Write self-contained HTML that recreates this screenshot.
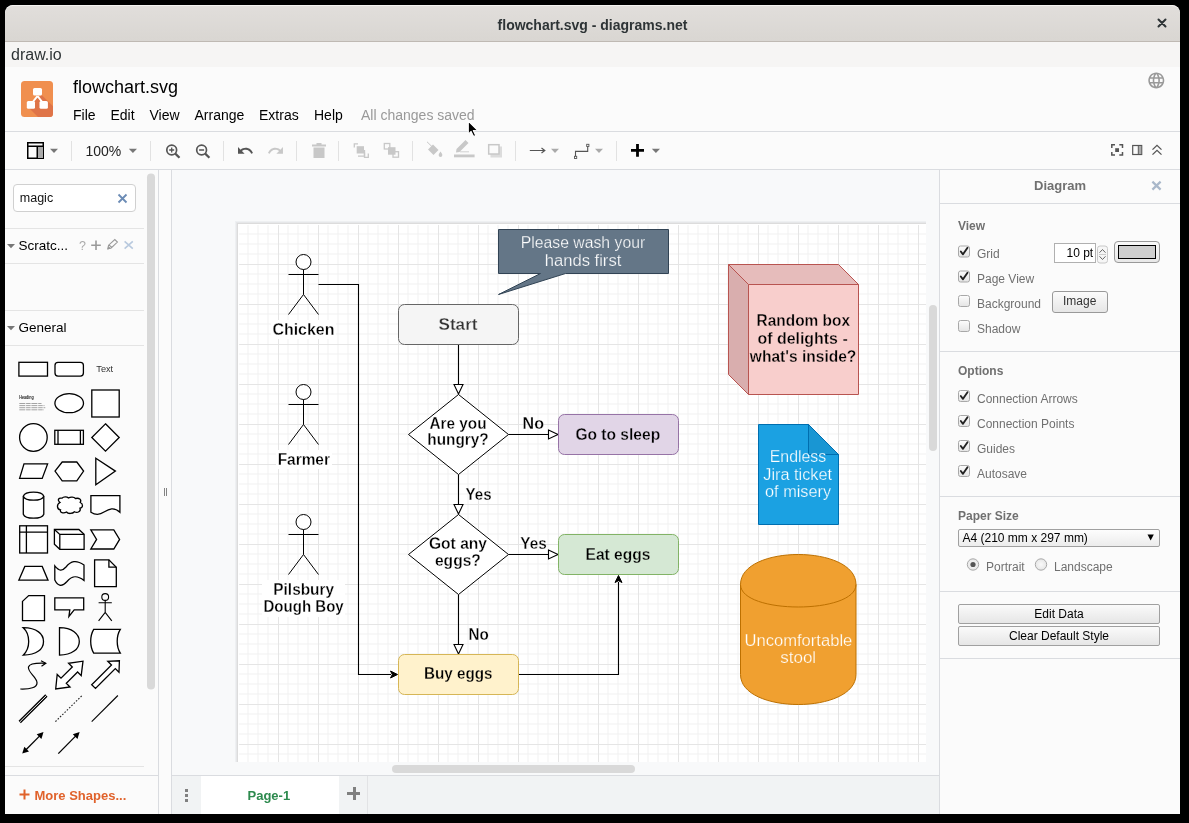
<!DOCTYPE html>
<html><head><meta charset="utf-8">
<style>
*{box-sizing:border-box;margin:0;padding:0}
html,body{width:1189px;height:823px;overflow:hidden;background:#000;font-family:"Liberation Sans",sans-serif}
.a{position:absolute}
.t{position:absolute;white-space:nowrap;line-height:1}
#win{position:absolute;left:5px;top:5px;width:1175px;height:809px;background:#fbfbfb;border-radius:8px 8px 0 0;overflow:hidden;will-change:transform}
</style></head><body>
<div id="win">
  <!-- title bar -->
  <div class="a" style="left:0;top:0;width:1175px;height:37px;background:linear-gradient(#e1dedb,#d9d6d2);border-bottom:1px solid #bfb9b3;border-top:1px solid #f4f2f0;border-radius:8px 8px 0 0"></div>
  <div class="t" style="left:0;width:1175px;text-align:center;top:13px;font-size:14px;font-weight:700;color:#2e3436">flowchart.svg - diagrams.net</div>
  <svg class="a" style="left:1151px;top:12px" width="12" height="12" viewBox="0 0 12 12"><path d="M2.5 2.5L9.5 9.5M9.5 2.5L2.5 9.5" stroke="#2e3436" stroke-width="2" stroke-linecap="round"/></svg>
  <!-- draw.io bar -->
  <div class="a" style="left:0;top:37px;width:1175px;height:25px;background:#f6f5f4"></div>
  <div class="t" style="left:6px;top:42px;font-size:16px;color:#2e3436">draw.io</div>
  <!-- header -->
  <div class="a" style="left:0;top:62px;width:1175px;height:65px;background:#fbfbfb;border-bottom:1px solid #dadce0"></div>
    <svg class="a" style="left:16px;top:76px" width="32" height="36" viewBox="0 0 32 36">
    <rect x="0" y="0" width="32" height="36" rx="3.5" fill="#f08f4f"/>
    <path d="M20.7 14 L32 25.3 L32 32.5 Q32 36 28.5 36 L17 36 L6 25 Z" fill="#df7448"/>
    <path d="M16.5 15 L11 22 M16.5 15 L22 22" stroke="#fff" stroke-width="2"/>
    <rect x="12" y="7" width="9" height="7.5" rx="1.5" fill="#fff"/>
    <rect x="5.8" y="20" width="8.2" height="7.8" rx="1.5" fill="#fff"/>
    <rect x="18.5" y="20" width="8.4" height="7.8" rx="1.5" fill="#fff"/>
  </svg>
  <div class="t" style="left:68px;top:73px;font-size:18px;color:#000">flowchart.svg</div>
  <div class="t" style="left:68px;top:103px;font-size:14px;color:#000">File</div>
  <div class="t" style="left:105.5px;top:103px;font-size:14px;color:#000">Edit</div>
  <div class="t" style="left:144.5px;top:103px;font-size:14px;color:#000">View</div>
  <div class="t" style="left:189.5px;top:103px;font-size:14px;color:#000">Arrange</div>
  <div class="t" style="left:254px;top:103px;font-size:14px;color:#000">Extras</div>
  <div class="t" style="left:309px;top:103px;font-size:14px;color:#000">Help</div>
  <div class="t" style="left:356px;top:103px;font-size:14px;color:#999">All changes saved</div>
  <svg class="a" style="left:0;top:0" width="1175" height="120" viewBox="5 5 1175 120"><path transform="translate(1146.7 70.8) scale(0.8)" fill="#9a9a9a" d="M11.99 2C6.47 2 2 6.48 2 12s4.47 10 9.99 10C17.520 22 22 17.52 22 12S17.52 2 11.99 2zm6.93 6h-2.95c-.32-1.25-.78-2.45-1.38-3.56 1.84.63 3.37 1.91 4.33 3.56zM12 4.04c.83 1.2 1.48 2.53 1.91 3.96h-3.82c.43-1.43 1.08-2.76 1.910-3.960zM4.26 14C4.1 13.36 4 12.69 4 12s.1-1.36.26-2h3.38c-.08.66-.14 1.32-.14 2 0 .68.06 1.34.14 2H4.26zm.82 2h2.95c.32 1.25.78 2.45 1.38 3.56-1.84-.63-3.37-1.9-4.33-3.56zm2.95-8H5.08c.96-1.66 2.49-2.93 4.33-3.56C8.81 5.55 8.35 6.75 8.03 8zM12 19.96c-.83-1.2-1.48-2.53-1.91-3.96h3.82c-.43 1.43-1.08 2.76-1.91 3.96zM14.34 14H9.66c-.09-.66-.16-1.32-.16-2 0-.68.07-1.35.16-2h4.68c.09.65.16 1.32.16 2 0 .68-.07 1.34-.16 2zm.25 5.56c.6-1.11 1.06-2.31 1.38-3.56h2.95c-.96 1.65-2.49 2.93-4.33 3.56zM16.36 14c.08-.66.14-1.32.14-2 0-.68-.06-1.34-.14-2h3.38c.16.64.26 1.31.26 2s-.1 1.36-.26 2h-3.38z"/></svg>
  <svg class="a" style="left:0;top:0;z-index:50" width="1175" height="200" viewBox="5 5 1175 200">
    <path d="M468.3 121.2V134.2L471.1 131.4L473.6 136.5L475.7 135.6L473.3 130.5L477.4 130.2Z" fill="#000" stroke="#fff" stroke-width="1.1" stroke-linejoin="round"/>
  </svg>

  <!-- toolbar -->
  <div class="a" style="left:0;top:127px;width:1175px;height:38px;background:#fbfbfb;border-bottom:1px solid #dadce0"></div>
    <!-- toolbar (win coords = page - 5) -->
  <svg class="a" style="left:0;top:127px" width="1175" height="38" viewBox="5 132 1175 38">
    <g fill="none">
      <rect x="27.75" y="142.75" width="15.5" height="15.5" stroke="#000" stroke-width="1.5"/>
      <rect x="38" y="147" width="5" height="11" fill="#aaa"/>
      <path d="M27.75 146.25H43.25M37.25 146.25V158.25" stroke="#000" stroke-width="1.5"/>
    </g>
    <g fill="#777">
      <path d="M50 148.7H58L54 153Z"/>
      <path d="M128.8 148.7H137L132.9 153Z"/>
      <path d="M651.8 148.7H660L655.9 153Z"/>
    </g>
    <g fill="#aaa">
      <path d="M551 148.7H559L555 153Z"/>
      <path d="M595 148.7H603L599 153Z"/>
    </g>
    <g stroke="#e2e2e2" stroke-width="1">
      <path d="M71.5 141V161M150.5 141V161M223.5 141V161M296.5 141V161M338.5 141V161M412.5 141V161M515.5 141V161M616.5 141V161"/>
    </g>
    <!-- zoom in/out -->
    <g fill="none" stroke="#555" stroke-width="1.7">
      <circle cx="171.7" cy="150" r="4.9"/>
      <path d="M175.3 153.6L179.5 157.8" stroke-width="2.2"/>
      <path d="M169.2 150H174.2M171.7 147.5V152.5" stroke-width="1.3"/>
      <circle cx="201.6" cy="150" r="4.9"/>
      <path d="M205.2 153.6L209.4 157.8" stroke-width="2.2"/>
      <path d="M199.1 150H204.1" stroke-width="1.3"/>
    </g>
    <!-- undo / redo -->
    <path transform="translate(236.54 142) scale(0.73)" d="M12.5 8c-2.65 0-5.05.99-6.9 2.6L2 7v9h9l-3.62-3.62c1.39-1.16 3.16-1.88 5.12-1.88 3.54 0 6.550 2.31 7.6 5.5l2.37-.78C21.08 11.03 17.15 8 12.5 8z" fill="#555"/>
    <path transform="translate(266.9 142) scale(0.73)" d="M18.4 10.6C16.55 8.99 14.15 8 11.5 8c-4.65 0-8.58 3.03-9.960 7.22L3.9 16c1.05-3.19 4.05-5.5 7.6-5.5 1.95 0 3.73.72 5.12 1.88L13 16h9V7l-3.6 3.6z" fill="#c8c8c8"/>
    <!-- trash -->
    <g fill="#c8c8c8"><rect x="312" y="144.5" width="14" height="2"/><rect x="316.5" y="143" width="5" height="2"/><rect x="313.5" y="147.5" width="11" height="10.5"/></g>
    <!-- to front / to back -->
    <g fill="none" stroke="#c8c8c8" stroke-width="1.3">
      <path d="M354.3 147.5V143.8H358M364.5 152.5V157.4H368.3V153.6"/>
      <path d="M358 156.2H364.5V150"/>
      <rect x="384.3" y="143.5" width="5.5" height="5.5"/><rect x="393" y="151.7" width="5.5" height="5.5"/>
    </g>
    <rect x="356.7" y="146.2" width="7.3" height="7.3" fill="#c8c8c8"/>
    <rect x="388" y="147.2" width="7.5" height="7.5" fill="#c8c8c8"/>
    <!-- fill -->
    <path d="M428 149.5 L433 144.5 L438.5 150 L433.5 155 Z" fill="#c8c8c8"/>
    <path d="M427 141.8 L435 149.5" stroke="#c8c8c8" stroke-width="1"/>
    <path d="M440.5 151.5 Q442.5 154 442.3 155.3 A1.8 1.8 0 0 1 438.7 155.3 Q438.5 154 440.5 151.5Z" fill="#c8c8c8"/>
    <!-- line color -->
    <rect x="454" y="154.5" width="20.6" height="2.8" fill="#c8c8c8"/>
    <path d="M456 152.5 L456.5 149 L465.5 140 L468.5 143 L459.5 152 Z" fill="#c8c8c8"/>
    <path d="M460 151.8 H469" stroke="#c8c8c8" stroke-width="0.8"/>
    <!-- shadow -->
    <rect x="490.5" y="146.5" width="11.5" height="11" fill="#dcdcdc"/>
    <rect x="488.7" y="144.7" width="10.3" height="9.3" fill="#fbfbfb" stroke="#c8c8c8" stroke-width="1.5"/>
    <!-- connection arrow -->
    <path d="M529.8 150.5H544.5M541.5 148L544.8 150.5L541.5 153" fill="none" stroke="#555" stroke-width="1.2"/>
    <!-- waypoints -->
    <path d="M575.5 156.4V151.4H587.7V146.6" fill="none" stroke="#555" stroke-width="1.1"/>
    <rect x="574.5" y="156.3" width="2.2" height="2.2" fill="#fff" stroke="#555" stroke-width="0.9"/>
    <rect x="586.7" y="144.3" width="2.2" height="2.2" fill="#fff" stroke="#555" stroke-width="0.9"/>
    <!-- plus -->
    <path d="M637.5 144V156.7M631 150.3H644" stroke="#000" stroke-width="2.8"/>
    <!-- right icons -->
    <g fill="none" stroke="#555" stroke-width="1.5">
      <path d="M1111.8 148V144.8H1115M1119.3 144.8H1122.5V148M1122.5 152V155.1H1119.3M1115 155.1H1111.8V152"/>
      <rect x="1132.7" y="145.5" width="9" height="9" stroke-width="1.2"/>
      <path d="M1152.5 149.6L1157 145.3L1161.5 149.6M1152.5 154.6L1157 150.3L1161.5 154.6" stroke-width="1.3"/>
    </g>
    <rect x="1115.2" y="148.2" width="3.8" height="3.8" fill="#555"/>
    <rect x="1138.6" y="146" width="2.6" height="8" fill="#aaa"/>
    <path d="M1138.3 145.5V154.5" stroke="#555" stroke-width="1"/>
  </svg>
  <div class="t" style="left:80.5px;top:139px;font-size:14px;color:#222">100%</div>

  <!-- sidebar -->
  <div class="a" style="left:0;top:165px;width:154px;height:644px;background:#fbfbfb;border-right:1px solid #dadce0"></div>
  <div class="a" style="left:0;top:770px;width:153px;height:1px;background:#dadce0"></div>
  <div class="a" style="left:154px;top:165px;width:13px;height:644px;background:#fbfbfb;border-right:1px solid #dadce0"></div>
    <!-- sidebar -->
  <div class="a" style="left:8px;top:179px;width:123px;height:28px;background:#fff;border:1px solid #d0d0d0;border-radius:4px"></div>
  <div class="t" style="left:14.8px;top:186.5px;font-size:12.5px;color:#111">magic</div>
  <div class="t" style="left:13.6px;top:234.2px;font-size:13.5px;color:#000">Scratc...</div>
  <div class="t" style="left:13.6px;top:316.2px;font-size:13.5px;color:#000">General</div>
  <div class="t" style="left:91.3px;top:360px;font-size:9.2px;color:#333">Text</div>
  <div class="t" style="left:29.5px;top:784px;font-size:13px;font-weight:700;color:#e0622b">More Shapes...</div>
  <svg class="a" style="left:0;top:165px" width="167" height="644" viewBox="5 170 167 644">
    <!-- search x -->
    <path d="M118.5 194.5L126.5 202.5M126.5 194.5L118.5 202.5" stroke="#6b8bb5" stroke-width="1.8"/>
    <g stroke="#e4e4e4" stroke-width="1"><path d="M5 228.5H144M5 263.5H144M5 310.5H144M5 345.5H144M5 766.5H144"/></g>
    <path d="M7 244H15L11 248.3Z" fill="#777"/>
    <path d="M7 326H15L11 330.3Z" fill="#777"/>
    <text x="79" y="250" font-family="Liberation Sans" font-size="12.5" fill="#aaa">?</text>
    <path d="M96 240.5V250M91.2 245.2H100.8" stroke="#999" stroke-width="1.6"/>
    <path d="M107.8 248.7L108.6 245.2L114.8 239.5L117.4 242.1L111.2 248Z M109 244.8L112 247.6" fill="none" stroke="#999" stroke-width="1.1"/>
    <path d="M107.6 249.5L108.4 246L111 248.5Z" fill="#999"/>
    <path d="M124.6 241.3L132.8 248.6M132.8 241.3L124.6 248.6" stroke="#b8c9de" stroke-width="1.6"/>
    <!-- scrollbar -->
    <rect x="147" y="173.5" width="8" height="516" rx="4" fill="#d9d9d9"/>
    <!-- splitter -->
    <path d="M164.5 488V496M166.5 488V496" stroke="#666" stroke-width="0.8"/>
    <!-- more shapes plus -->
    <path d="M24.5 789.5V799.5M19.5 794.5H29.5" stroke="#e0622b" stroke-width="2"/>
    <!-- shapes -->
    <g fill="#fff" stroke="#000" stroke-width="1.3" stroke-linejoin="miter">
      <rect x="18.9" y="362.3" width="28.6" height="13.8"/>
      <rect x="55" y="362.3" width="28.4" height="13.8" rx="3"/>
      <ellipse cx="69.2" cy="403.2" rx="14.3" ry="9.5"/>
      <rect x="91.8" y="390" width="27.4" height="27"/>
      <circle cx="33.4" cy="437.5" r="13.8"/>
      <rect x="54.8" y="430.3" width="28.6" height="14"/>
      <path d="M58 430.3V444.3M80.4 430.3V444.3" fill="none"/>
      <path d="M105.5 423.8L119.2 437.5L105.5 451.2L91.8 437.5Z"/>
      <path d="M19.6 478.4L24 463.9H47.6L42.2 478.4Z"/>
      <path d="M55 471.1L62.2 462H76.8L83.6 471.1L76.8 480.8H62.2Z"/>
      <path d="M95.8 458.2L115.4 471.1L95.8 484.8Z"/>
      <path d="M23.3 496.2A10.4 4.8 0 0 1 43.8 496.2V514.2A10.4 4.8 0 0 1 23.3 514.2Z"/>
      <path d="M23.3 496.2A10.4 4.8 0 0 0 43.8 496.2" fill="none"/>
      <path d="M60 502.5C57 500 58.5 497.5 62 498.2C63.5 496.4 67 496.6 68.5 498C70.5 496.6 74 496.8 75.5 498.5C79 497.6 82 499.5 80.2 502.5C83.5 504 83 507.8 80 508.2C81.2 511.2 77.5 513.5 74.5 511.8C72.5 514 68 514 66.5 512C63.5 513.8 59.5 512.6 60.5 509.8C56.8 509.4 56.3 504.2 60 502.5Z"/>
      <path d="M90.9 495.7H119.9V512.2C114 506.5 109 509 104 512C99 515.5 94.5 514.5 90.9 512.2Z"/>
      <rect x="19.7" y="525.8" width="27.8" height="27.2"/>
      <path d="M26.4 525.8V553M19.7 532.2H47.5" fill="none"/>
      <path d="M54.4 529.5H78.9L84.1 534.4V549.3H59.8L54.4 544.2Z"/>
      <path d="M54.4 529.5L59.8 534.4H84.1M59.8 534.4V549.3" fill="none"/>
      <path d="M90.8 529.8H113.8L119.6 539.4L113.8 549H90.8L96.6 539.4Z"/>
      <path d="M18.8 580.2L24.8 566.4H42.2L48 580.2Z"/>
      <path d="M54.8 565.8C59 571 62 571.5 66 567C71 561 76 559.5 84 565V580.5C77 575 72 575.5 67 581.5C62 587 58 586.5 54.8 580Z"/>
      <path d="M94.6 559.8H108.9L116.3 567.2V586.6H94.6Z"/>
      <path d="M108.9 559.8V567.2H116.3" fill="none"/>
      <path d="M22.5 601.4L28.7 595.6H44.5V620.7H22.5Z"/>
      <path d="M54.8 597.8H83.7V609.8H74.2L68.9 616.5L69.8 609.8H54.8Z"/>
      <path d="M23.2 627.7C37 628 43.5 634 43.5 641.4C43.5 649 37 655 23.2 655.1C27.5 651 28.7 646 28.7 641.4C28.7 636.5 27.5 631.5 23.2 627.7Z"/>
      <path d="M59.5 627.7C72 627.7 79.3 634 79.3 641.4C79.3 649 72 655.1 59.5 655.1Z"/>
      <path d="M93.7 629.3H120.3C118 633 117.2 637 117.2 641.3C117.2 645.5 118 649.5 120.3 653.2H93.7C91.5 649.5 90.7 645.5 90.7 641.3C90.7 637 91.5 633 93.7 629.3Z"/>
    </g>
    <!-- actor -->
    <g fill="none" stroke="#000" stroke-width="1.1">
      <circle cx="105.2" cy="597" r="3.4"/>
      <path d="M105.2 600.4V612.4M98.6 602.8H111.8M98.6 620.8L105.2 612.4L111.8 620.8"/>
      <path d="M20.3 689C29 689.3 38.5 688 36.8 681.5C35.5 676 27.5 672 28.5 667C29.5 663 38 663 45.5 663.3" stroke-width="1.2"/>
      <path d="M41 660.8L45.8 663.3L41.5 666.3" stroke-width="1.2"/>
    </g>
    <g fill="#fff" stroke="#000" stroke-width="1.3">
      <path d="M55.7 689L57.2 674.5L61 678.2L72.3 667L68.6 663.3L83 661.2L81.2 675.6L77.6 672L66.3 683.3L70 687Z"/>
      <path d="M91.7 684.8L111.5 665L107.8 661.3L119.4 660.8L119 672.3L115.3 668.6L95.5 688.4Z"/>
    </g>
    <g stroke="#000" fill="none">
      <path d="M19.7 722L46.4 695.5" stroke-width="3.2"/>
      <path d="M19.7 722L46.4 695.5" stroke="#fff" stroke-width="1"/>
      <path d="M55.4 721.6L81.8 695.8" stroke-width="1.1" stroke-dasharray="1.6 1.6" stroke="#222"/>
      <path d="M91.7 721.6L117.9 695.5" stroke-width="1.1"/>
      <path d="M24.5 751.3L41.2 734.4" stroke-width="1.3"/>
      <path d="M58.3 753.6L77.3 734.4" stroke-width="1.3"/>
    </g>
    <g fill="#000">
      <path d="M22.2 753.6L24.3 746.8L29 751.5Z"/>
      <path d="M43.5 732.1L41.4 738.9L36.7 734.2Z"/>
      <path d="M79.6 732.1L77.5 738.9L72.8 734.2Z"/>
    </g>
    <!-- heading -->
    <text x="19.3" y="399.3" font-family="Liberation Sans" font-size="5.2" font-weight="700" fill="#222" textLength="14.5" lengthAdjust="spacingAndGlyphs">Heading</text>
    <g stroke="#6a6a6a" stroke-width="0.6" stroke-dasharray="6 0.8 4.5 0.8"><path d="M19.3 403.5H41.5M19.3 405.6H44.5M19.3 407.7H45.3M19.3 409.8H44"/></g>
  </svg>

  <!-- canvas -->
  <svg class="a" style="left:167px;top:165px" width="767" height="605" viewBox="172 170 767 605">
<rect x="172" y="170" width="767" height="605" fill="#f8f9fa"/>
<rect x="235" y="221" width="691" height="541" fill="#eef0f2"/>
<rect x="236" y="222" width="690" height="540" fill="#e6e7e9"/>
<rect x="237" y="223" width="689" height="539" fill="#dcdcdc"/>
<rect x="238" y="224" width="688" height="538" fill="#fff"/>
<path d="M248 225V762M258 225V762M268 225V762M288 225V762M298 225V762M308 225V762M328 225V762M338 225V762M348 225V762M368 225V762M378 225V762M388 225V762M408 225V762M418 225V762M428 225V762M448 225V762M458 225V762M468 225V762M488 225V762M498 225V762M508 225V762M528 225V762M538 225V762M548 225V762M568 225V762M578 225V762M588 225V762M608 225V762M618 225V762M628 225V762M648 225V762M658 225V762M668 225V762M688 225V762M698 225V762M708 225V762M728 225V762M738 225V762M748 225V762M768 225V762M778 225V762M788 225V762M808 225V762M818 225V762M828 225V762M848 225V762M858 225V762M868 225V762M888 225V762M898 225V762M908 225V762M239 234H926M239 244H926M239 254H926M239 274H926M239 284H926M239 294H926M239 314H926M239 324H926M239 334H926M239 354H926M239 364H926M239 374H926M239 394H926M239 404H926M239 414H926M239 434H926M239 444H926M239 454H926M239 474H926M239 484H926M239 494H926M239 514H926M239 524H926M239 534H926M239 554H926M239 564H926M239 574H926M239 594H926M239 604H926M239 614H926M239 634H926M239 644H926M239 654H926M239 674H926M239 684H926M239 694H926M239 714H926M239 724H926M239 734H926M239 754H926" stroke="#f1f1f1" stroke-width="1"/>
<path d="M278.5 225V762M318.5 225V762M358.5 225V762M398.5 225V762M438.5 225V762M478.5 225V762M518.5 225V762M558.5 225V762M598.5 225V762M638.5 225V762M678.5 225V762M718.5 225V762M758.5 225V762M798.5 225V762M838.5 225V762M878.5 225V762M918.5 225V762M239 264.5H926M239 304.5H926M239 344.5H926M239 384.5H926M239 424.5H926M239 464.5H926M239 504.5H926M239 544.5H926M239 584.5H926M239 624.5H926M239 664.5H926M239 704.5H926M239 744.5H926" stroke="#e5e5e5" stroke-width="1"/>
<g fill="none" stroke="#000" stroke-width="1.1"><path d="M318.5 284.5H358.5V674.5H391"/><path d="M458.5 344.5V385"/><path d="M508.5 434.5H549"/><path d="M458.5 474.5V505"/><path d="M508.5 554.5H549"/><path d="M458.5 594.5V645"/><path d="M518.5 674.5H618.5V582"/></g>
<g fill="#fff" stroke="#000" stroke-width="1.1"><path d="M454 384.5H463L458.5 394Z"/><path d="M548.5 430L558 434.5L548.5 439Z"/><path d="M454 504.5H463L458.5 514Z"/><path d="M548.5 550L558 554.5L548.5 559Z"/><path d="M454 644.5H463L458.5 654Z"/></g>
<g fill="#000" stroke="#000" stroke-width="1"><path d="M397.5 674.5L390.5 671L392.3 674.5L390.5 678Z"/><path d="M618.5 575.5L615 582.5L618.5 580.7L622 582.5Z"/></g>
<path d="M498.5 229.5H668.5V273.5H565.5L498.5 294.5L540.5 273.5H498.5Z" fill="#647687" stroke="#314354" stroke-width="1"/>
<text x="583.0" y="248" text-anchor="middle" font-family="Liberation Sans" font-size="16" font-weight="400" fill="#fff" textLength="124.3" lengthAdjust="spacingAndGlyphs" stroke="#647687" stroke-width="0.25">Please wash your</text>
<text x="583.0" y="265.5" text-anchor="middle" font-family="Liberation Sans" font-size="16" font-weight="400" fill="#fff" textLength="76.7" lengthAdjust="spacingAndGlyphs" stroke="#647687" stroke-width="0.25">hands first</text>
<rect x="398.5" y="304.5" width="120" height="40" rx="6" fill="#f5f5f5" stroke="#666" stroke-width="1"/>
<text x="458.0" y="329.9" text-anchor="middle" font-family="Liberation Sans" font-size="16.5" font-weight="700" fill="#333" textLength="39.0" lengthAdjust="spacingAndGlyphs" stroke="#f5f5f5" stroke-width="0.3">Start</text>
<path d="M458.5 394.5L508.5 434.5L458.5 474.5L408.5 434.5Z" fill="#fff" stroke="#000" stroke-width="1"/>
<text x="458.0" y="428.8" text-anchor="middle" font-family="Liberation Sans" font-size="16.5" font-weight="700" fill="#000" textLength="57.0" lengthAdjust="spacingAndGlyphs" stroke="#fff" stroke-width="0.3">Are you</text>
<text x="458.0" y="445.2" text-anchor="middle" font-family="Liberation Sans" font-size="16.5" font-weight="700" fill="#000" textLength="61.5" lengthAdjust="spacingAndGlyphs" stroke="#fff" stroke-width="0.3">hungry?</text>
<text x="533.3" y="429.4" text-anchor="middle" font-family="Liberation Sans" font-size="16.5" font-weight="700" fill="#000" textLength="21.4" lengthAdjust="spacingAndGlyphs" stroke="#fff" stroke-width="0.3">No</text>
<rect x="558.5" y="414.5" width="120" height="40" rx="6" fill="#e1d5e7" stroke="#9673a6" stroke-width="1"/>
<text x="617.8" y="439.6" text-anchor="middle" font-family="Liberation Sans" font-size="16.5" font-weight="700" fill="#000" textLength="84.8" lengthAdjust="spacingAndGlyphs" stroke="#e1d5e7" stroke-width="0.3">Go to sleep</text>
<text x="478.6" y="499.5" text-anchor="middle" font-family="Liberation Sans" font-size="16.5" font-weight="700" fill="#000" textLength="26.0" lengthAdjust="spacingAndGlyphs" stroke="#fff" stroke-width="0.3">Yes</text>
<path d="M458.5 514.5L508.5 554.5L458.5 594.5L408.5 554.5Z" fill="#fff" stroke="#000" stroke-width="1"/>
<text x="458.0" y="548.9" text-anchor="middle" font-family="Liberation Sans" font-size="16.5" font-weight="700" fill="#000" textLength="58.1" lengthAdjust="spacingAndGlyphs" stroke="#fff" stroke-width="0.3">Got any</text>
<text x="457.9" y="565.9" text-anchor="middle" font-family="Liberation Sans" font-size="16.5" font-weight="700" fill="#000" textLength="45.9" lengthAdjust="spacingAndGlyphs" stroke="#fff" stroke-width="0.3">eggs?</text>
<text x="533.5" y="549.3" text-anchor="middle" font-family="Liberation Sans" font-size="16.5" font-weight="700" fill="#000" textLength="26.4" lengthAdjust="spacingAndGlyphs" stroke="#fff" stroke-width="0.3">Yes</text>
<rect x="558.5" y="534.5" width="120" height="40" rx="6" fill="#d5e8d4" stroke="#82b366" stroke-width="1"/>
<text x="618.0" y="559.5" text-anchor="middle" font-family="Liberation Sans" font-size="16.5" font-weight="700" fill="#000" textLength="64.9" lengthAdjust="spacingAndGlyphs" stroke="#d5e8d4" stroke-width="0.3">Eat eggs</text>
<text x="478.6" y="639.5" text-anchor="middle" font-family="Liberation Sans" font-size="16.5" font-weight="700" fill="#000" textLength="20.3" lengthAdjust="spacingAndGlyphs" stroke="#fff" stroke-width="0.3">No</text>
<rect x="398.5" y="654.5" width="120" height="40" rx="6" fill="#fff2cc" stroke="#d6b656" stroke-width="1"/>
<text x="458.3" y="679.3" text-anchor="middle" font-family="Liberation Sans" font-size="16.5" font-weight="700" fill="#000" textLength="68.6" lengthAdjust="spacingAndGlyphs" stroke="#fff2cc" stroke-width="0.3">Buy eggs</text>
<g fill="none" stroke="#000" stroke-width="1"><ellipse cx="303.5" cy="262.0" rx="7.5" ry="7.5" fill="#fff"/><path d="M303.5 269.5V294.5M288.5 274.5H318.5M288.5 314.5L303.5 294.5L318.5 314.5"/></g>
<g fill="none" stroke="#000" stroke-width="1"><ellipse cx="303.5" cy="392.0" rx="7.5" ry="7.5" fill="#fff"/><path d="M303.5 399.5V424.5M288.5 404.5H318.5M288.5 444.5L303.5 424.5L318.5 444.5"/></g>
<g fill="none" stroke="#000" stroke-width="1"><ellipse cx="303.5" cy="522.0" rx="7.5" ry="7.5" fill="#fff"/><path d="M303.5 529.5V554.5M288.5 534.5H318.5M288.5 574.5L303.5 554.5L318.5 574.5"/></g>
<rect x="271" y="320" width="65" height="19" fill="#fff"/>
<text x="303.4" y="334.8" text-anchor="middle" font-family="Liberation Sans" font-size="16.5" font-weight="700" fill="#000" textLength="62.0" lengthAdjust="spacingAndGlyphs" stroke="#fff" stroke-width="0.3">Chicken</text>
<rect x="276" y="450" width="56" height="19" fill="#fff"/>
<text x="303.8" y="464.6" text-anchor="middle" font-family="Liberation Sans" font-size="16.5" font-weight="700" fill="#000" textLength="52.3" lengthAdjust="spacingAndGlyphs" stroke="#fff" stroke-width="0.3">Farmer</text>
<rect x="262" y="580" width="83" height="37" fill="#fff"/>
<text x="303.7" y="595" text-anchor="middle" font-family="Liberation Sans" font-size="16.5" font-weight="700" fill="#000" textLength="60.8" lengthAdjust="spacingAndGlyphs" stroke="#fff" stroke-width="0.3">Pilsbury</text>
<text x="303.6" y="612" text-anchor="middle" font-family="Liberation Sans" font-size="16.5" font-weight="700" fill="#000" textLength="80.2" lengthAdjust="spacingAndGlyphs" stroke="#fff" stroke-width="0.3">Dough Boy</text>
<g stroke="#b85450" stroke-width="1"><path d="M748.5 284.5H858.5V394.5H748.5Z" fill="#f8cecc"/><path d="M728.5 264.5H838.5L858.5 284.5H748.5Z" fill="#e6bcbb"/><path d="M728.5 264.5L748.5 284.5V394.5L728.5 374.5Z" fill="#d9aeae"/></g>
<text x="803.3" y="326.4" text-anchor="middle" font-family="Liberation Sans" font-size="16.5" font-weight="700" fill="#000" textLength="93.4" lengthAdjust="spacingAndGlyphs" stroke="#f8cecc" stroke-width="0.3">Random box</text>
<text x="802.6" y="344" text-anchor="middle" font-family="Liberation Sans" font-size="16.5" font-weight="700" fill="#000" textLength="90.2" lengthAdjust="spacingAndGlyphs" stroke="#f8cecc" stroke-width="0.3">of delights -</text>
<text x="803.1" y="362.2" text-anchor="middle" font-family="Liberation Sans" font-size="16.5" font-weight="700" fill="#000" textLength="106.5" lengthAdjust="spacingAndGlyphs" stroke="#f8cecc" stroke-width="0.3">what&#39;s inside?</text>
<path d="M758.5 424.5H808.5L838.5 454.5V524.5H758.5Z" fill="#1ba1e2" stroke="#006eaf" stroke-width="1"/>
<path d="M808.5 424.5V454.5H838.5Z" fill="#1996d3" stroke="#006eaf" stroke-width="1"/>
<text x="798.0" y="461.5" text-anchor="middle" font-family="Liberation Sans" font-size="16" font-weight="400" fill="#fff" textLength="56.5" lengthAdjust="spacingAndGlyphs" stroke="#1ba1e2" stroke-width="0.25">Endless</text>
<text x="797.7" y="479.6" text-anchor="middle" font-family="Liberation Sans" font-size="16" font-weight="400" fill="#fff" textLength="68.8" lengthAdjust="spacingAndGlyphs" stroke="#1ba1e2" stroke-width="0.25">Jira ticket</text>
<text x="798.1" y="497.2" text-anchor="middle" font-family="Liberation Sans" font-size="16" font-weight="400" fill="#fff" textLength="66.1" lengthAdjust="spacingAndGlyphs" stroke="#1ba1e2" stroke-width="0.25">of misery</text>
<path d="M740.5 584.5C740.5 544.5 856.0 544.5 856.0 584.5V674.5C856.0 714.5 740.5 714.5 740.5 674.5Z" fill="#f0a030" stroke="#bd7000" stroke-width="1"/>
<path d="M740.5 584.5C740.5 614.5 856.0 614.5 856.0 584.5" fill="none" stroke="#bd7000" stroke-width="1"/>
<text x="798.4" y="645.6" text-anchor="middle" font-family="Liberation Sans" font-size="16" font-weight="400" fill="#fff" textLength="107.8" lengthAdjust="spacingAndGlyphs" stroke="#f0a030" stroke-width="0.25">Uncomfortable</text>
<text x="798.2" y="663.2" text-anchor="middle" font-family="Liberation Sans" font-size="16" font-weight="400" fill="#fff" textLength="35.9" lengthAdjust="spacingAndGlyphs" stroke="#f0a030" stroke-width="0.25">stool</text>
<rect x="929" y="305" width="8" height="146" rx="4" fill="#d9d9d9"/>
<rect x="392" y="765" width="243" height="8" rx="4" fill="#d9d9d9"/>
</svg>

  <!-- right panel -->
  <div class="a" style="left:934px;top:165px;width:241px;height:644px;background:#fbfbfb;border-left:1px solid #dadce0"></div>
    <!-- format panel (page coords via wrapper) -->
  <div class="a" style="left:-5px;top:-5px;width:1189px;height:823px;pointer-events:none">
    <div class="a" style="left:940px;top:203px;width:240px;height:1px;background:#dadce0"></div>
    <div class="a" style="left:940px;top:351px;width:240px;height:1px;background:#dadce0"></div>
    <div class="a" style="left:940px;top:496px;width:240px;height:1px;background:#dadce0"></div>
    <div class="a" style="left:940px;top:591px;width:240px;height:1px;background:#dadce0"></div>
    <div class="a" style="left:940px;top:658px;width:240px;height:1px;background:#dadce0"></div>
    <div class="t" style="left:1034px;top:178.8px;font-size:13px;font-weight:700;color:#707070">Diagram</div>
    <svg class="a" style="left:1150px;top:179px" width="13" height="13" viewBox="0 0 13 13"><path d="M2.4 2.6L10.6 10.6M10.6 2.6L2.4 10.6" stroke="#a9b8ca" stroke-width="2.2"/></svg>
    <div class="t" style="left:958px;top:220.4px;font-size:12px;font-weight:700;color:#707070">View</div>
    <div class="t" style="left:977px;top:248px;font-size:12px;color:#707070">Grid</div>
    <div class="t" style="left:977px;top:272.8px;font-size:12px;color:#707070">Page View</div>
    <div class="t" style="left:977px;top:298.2px;font-size:12px;color:#707070">Background</div>
    <div class="t" style="left:977px;top:322.9px;font-size:12px;color:#707070">Shadow</div>
    <div class="a" style="left:1054px;top:243px;width:42px;height:20px;background:#fff;border:1px solid #b0b0b0"></div>
    <div class="t" style="left:1066.5px;top:246.8px;font-size:12px;color:#000">10 pt</div>
    <div class="a" style="left:1052px;top:291px;width:56px;height:21.5px;border:1px solid #999;border-radius:3px;background:linear-gradient(#fbfbfb,#e6e6e6)"></div>
    <div class="t" style="left:1063px;top:295.1px;font-size:12px;color:#333">Image</div>
    <div class="a" style="left:1114px;top:241px;width:46px;height:22px;border:1px solid #999;border-radius:4px;background:linear-gradient(#fafafa,#e8e8e8)"></div>
    <div class="a" style="left:1118px;top:245px;width:38px;height:14px;border:1.5px solid #000;background:#cfcfcf"></div>
    <div class="t" style="left:958px;top:364.5px;font-size:12px;font-weight:700;color:#707070">Options</div>
    <div class="t" style="left:977px;top:392.7px;font-size:12px;color:#707070">Connection Arrows</div>
    <div class="t" style="left:977px;top:417.7px;font-size:12px;color:#707070">Connection Points</div>
    <div class="t" style="left:977px;top:442.7px;font-size:12px;color:#707070">Guides</div>
    <div class="t" style="left:977px;top:467.7px;font-size:12px;color:#707070">Autosave</div>
    <div class="t" style="left:958px;top:509.6px;font-size:12px;font-weight:700;color:#707070">Paper Size</div>
    <div class="a" style="left:958px;top:529px;width:202px;height:18px;border:1px solid #a0a0a0;border-radius:2px;background:linear-gradient(#fdfdfd,#ececec)"></div>
    <div class="t" style="left:962.5px;top:531.5px;font-size:12px;color:#000">A4 (210 mm x 297 mm)</div>
    <svg class="a" style="left:1146px;top:533px" width="9" height="9" viewBox="0 0 9 9"><path d="M1.5 1.5H7.8L4.65 7.5Z" fill="#000"/></svg>
    <div class="t" style="left:986px;top:560.7px;font-size:12px;color:#707070">Portrait</div>
    <div class="t" style="left:1054px;top:560.7px;font-size:12px;color:#707070">Landscape</div>
    <div class="a" style="left:958px;top:604px;width:202px;height:20px;border:1px solid #a0a0a0;border-radius:2px;background:linear-gradient(#fafafa,#e6e6e6)"></div>
    <div class="t" style="left:958px;width:202px;text-align:center;top:608.2px;font-size:12px;color:#000">Edit Data</div>
    <div class="a" style="left:958px;top:626px;width:202px;height:20px;border:1px solid #a0a0a0;border-radius:2px;background:linear-gradient(#fafafa,#e6e6e6)"></div>
    <div class="t" style="left:958px;width:202px;text-align:center;top:630.2px;font-size:12px;color:#000">Clear Default Style</div>
    <svg class="a" style="left:0;top:0" width="1189" height="823" viewBox="0 0 1189 823">
      <defs>
        <linearGradient id="cbg" x1="0" y1="0" x2="0" y2="1"><stop offset="0" stop-color="#fdfdfd"/><stop offset="1" stop-color="#e4e4e4"/></linearGradient>
        <radialGradient id="rbg"><stop offset="0" stop-color="#fafafa"/><stop offset="1" stop-color="#e6e6e6"/></radialGradient>
      </defs>
      <g fill="url(#cbg)" stroke="#a8a8a8" stroke-width="1">
        <rect x="958.5" y="246" width="11" height="11" rx="2"/>
        <rect x="958.5" y="271" width="11" height="11" rx="2"/>
        <rect x="958.5" y="295.5" width="11" height="11" rx="2"/>
        <rect x="958.5" y="320.5" width="11" height="11" rx="2"/>
        <rect x="958.5" y="390.5" width="11" height="11" rx="2"/>
        <rect x="958.5" y="415.5" width="11" height="11" rx="2"/>
        <rect x="958.5" y="440.5" width="11" height="11" rx="2"/>
        <rect x="958.5" y="465.5" width="11" height="11" rx="2"/>
      </g>
      <g fill="none" stroke="#222" stroke-width="1.9" stroke-linecap="round" stroke-linejoin="round">
        <path d="M960.8 251.5L963 254.3L967.5 247.8"/>
        <path d="M960.8 276.5L963 279.3L967.5 272.8"/>
        <path d="M960.8 396L963 398.8L967.5 392.3"/>
        <path d="M960.8 421L963 423.8L967.5 417.3"/>
        <path d="M960.8 446L963 448.8L967.5 442.3"/>
        <path d="M960.8 471L963 473.8L967.5 467.3"/>
      </g>
      <g fill="url(#rbg)" stroke="#a8a8a8" stroke-width="1">
        <circle cx="973" cy="564.5" r="5.7"/>
        <circle cx="1041" cy="564.5" r="5.7"/>
      </g>
      <circle cx="973" cy="564.5" r="2.6" fill="#555"/>
      <!-- spinner -->
      <rect x="1097.5" y="246" width="10" height="17" rx="2.5" fill="#f6f6f6" stroke="#c8c8c8" stroke-width="1"/>
      <path d="M1099.5 252.7L1102.5 249.5L1105.5 252.7M1099.5 256.3L1102.5 259.5L1105.5 256.3" fill="none" stroke="#666" stroke-width="1"/>
      <path d="M1099 254.5H1106" stroke="#bbb" stroke-width="0.7"/>
    </svg>
  </div>

  <!-- tab bar -->
  <div class="a" style="left:167px;top:770px;width:767px;height:39px;background:#f1f3f4;border-top:1px solid #dadce0"></div>
    <div class="a" style="left:195.5px;top:771px;width:138px;height:38px;background:#fff"></div>
  <div class="a" style="left:362px;top:771px;width:1px;height:38px;background:#e2e3e5"></div>
  <div class="a" style="left:180px;top:783.5px;width:3px;height:3px;background:#808080"></div>
  <div class="a" style="left:180px;top:788.5px;width:3px;height:3px;background:#808080"></div>
  <div class="a" style="left:180px;top:793.5px;width:3px;height:3px;background:#808080"></div>
  <div class="a" style="left:348.4px;top:782.2px;width:2.6px;height:12.4px;background:#808080"></div>
  <div class="a" style="left:342.2px;top:787.1px;width:12.6px;height:2.6px;background:#808080"></div>
  <div class="t" style="left:242.5px;top:783.8px;font-size:13px;font-weight:700;color:#2d8a4e">Page-1</div>

</div>
</body></html>
